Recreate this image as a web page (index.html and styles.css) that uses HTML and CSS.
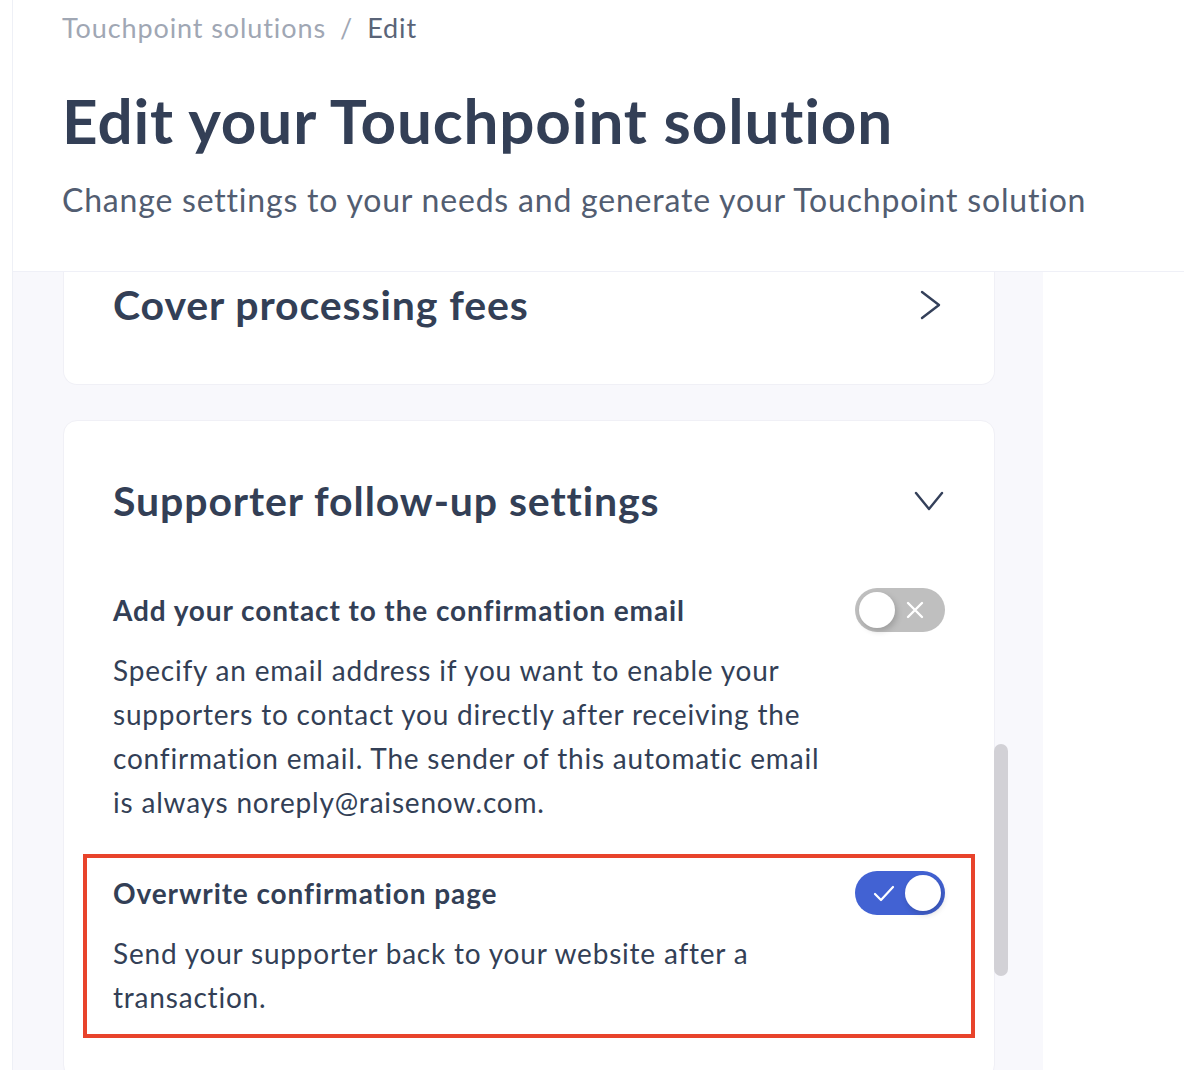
FILE: index.html
```html
<!DOCTYPE html>
<html lang="en">
<head>
<meta charset="utf-8">
<title>Edit your Touchpoint solution</title>
<link rel="stylesheet" href="styles.css">
</head>
<body>
<div class="app">
  <header class="page-header">
    <nav class="breadcrumb">
      <span class="crumb-link">Touchpoint solutions</span>
      <span class="crumb-sep">/</span>
      <span class="crumb-current">Edit</span>
    </nav>
    <h1 class="page-title">Edit your Touchpoint solution</h1>
    <p class="page-subtitle">Change settings to your needs and generate your Touchpoint solution</p>
  </header>
  <div class="content">
    <main class="panel">
      <section class="card card-clipped">
        <div class="card-head">
          <h2 class="card-title">Cover processing fees</h2>
          <svg class="chevron" width="28" height="30" viewBox="0 0 28 30"><polyline points="9,2 26,15 9,28" fill="none" stroke="#34405a" stroke-width="2.4" stroke-linecap="round" stroke-linejoin="round"/></svg>
        </div>
      </section>
      <section class="card card-open">
        <div class="card-head">
          <h2 class="card-title">Supporter follow-up settings</h2>
          <svg class="chevron" width="30" height="24" viewBox="0 0 30 24"><polyline points="2,4 15,20 28,4" fill="none" stroke="#34405a" stroke-width="2.4" stroke-linecap="round" stroke-linejoin="round"/></svg>
        </div>
        <div class="setting">
          <div class="setting-head">
            <h3 class="setting-title">Add your contact to the confirmation email</h3>
            <span class="toggle toggle-off">
              <svg class="toggle-icon icon-x" width="18" height="18" viewBox="0 0 18 18"><path d="M2 2 L16 16 M16 2 L2 16" stroke="#fff" stroke-width="2.4" stroke-linecap="round"/></svg>
              <span class="knob"></span>
            </span>
          </div>
          <p class="setting-desc">Specify an email address if you want to enable your<br>supporters to contact you directly after receiving the<br>confirmation email. The sender of this automatic email<br>is always noreply@raisenow.com.</p>
        </div>
        <div class="setting setting-highlight">
          <div class="setting-head">
            <h3 class="setting-title">Overwrite confirmation page</h3>
            <span class="toggle toggle-on">
              <svg class="toggle-icon icon-check" width="22" height="18" viewBox="0 0 22 18"><path d="M2 9 L8 15 L20 2" fill="none" stroke="#fff" stroke-width="2.2" stroke-linecap="round" stroke-linejoin="round"/></svg>
              <span class="knob"></span>
            </span>
          </div>
          <p class="setting-desc">Send your supporter back to your website after a<br>transaction.</p>
        </div>
      </section>
      <div class="scroll-thumb"></div>
    </main>
    <aside class="side"></aside>
  </div>
</div>
</body>
</html>
```
FILE: styles.css
```css
html, body {
  margin: 0;
  padding: 0;
  background: #ffffff;
  height: 100%;
}
body {
  font-family: "Lato", "Open Sans", sans-serif;
  color: #333f56;
  overflow: hidden;
}
.app {
  margin-left: 12px;
  border-left: 1px solid #eef0f6;
  height: 1070px;
  display: flex;
  flex-direction: column;
}
.page-header {
  padding: 0 0 0 49px;
  height: 272px;
  border-bottom: 1px solid #eff0f7;
  box-sizing: border-box;
}
.breadcrumb {
  padding-top: 10px;
  font-size: 27px;
  line-height: 36px;
  letter-spacing: 0.9px;
  display: flex;
  gap: 14px;
}
.crumb-link { color: #a0a7b4; }
.crumb-sep { color: #a0a7b4; }
.crumb-current { color: #5a6478; }
.page-title {
  margin: 38px 0 0;
  font-size: 62px;
  line-height: 72px;
  font-weight: 700;
  color: #333f56;
  letter-spacing: 0.85px;
}
.page-subtitle {
  margin: 24px 0 0;
  font-size: 32px;
  line-height: 40px;
  color: #525d71;
  letter-spacing: 0.8px;
}
.content {
  flex: 1;
  display: flex;
  overflow: hidden;
}
.panel {
  position: relative;
  width: 1030px;
  background: #f8f8fc;
  padding: 0 48px 0 50px;
  box-sizing: border-box;
  display: flex;
  flex-direction: column;
  gap: 35px;
  overflow: hidden;
}
.side { flex: 1; background: #fff; }
.card {
  background: #fff;
  border: 1px solid #f0f0f6;
  border-radius: 14px;
  padding: 0 49px;
  flex-shrink: 0;
}
.card-clipped {
  border-top: none;
  border-top-left-radius: 0;
  border-top-right-radius: 0;
  padding-top: 9px;
  padding-bottom: 55px;
}
.card-open {
  padding-top: 56px;
  padding-bottom: 40px;
}
.card-head {
  display: flex;
  align-items: center;
  justify-content: space-between;
  height: 48px;
}
.card-title {
  margin: 0;
  font-size: 41px;
  font-weight: 700;
  line-height: 48px;
  letter-spacing: 0.9px;
  color: #333f56;
}
.card-clipped .chevron { margin-right: 4px; }
.card-open .chevron { margin-right: 1px; }
.setting {
  border: 4px solid transparent;
  margin: 0 -30px;
  padding: 13px 26px;
}
.card-open .card-head + .setting { margin-top: 46px; }
.setting + .setting { margin-top: 13px; }
.setting-highlight {
  border-color: #e8432b;
  padding-bottom: 15px;
}
.setting-head {
  display: flex;
  align-items: center;
  justify-content: space-between;
  height: 44px;
}
.setting-title {
  margin: 0;
  font-size: 28px;
  font-weight: 700;
  line-height: 36px;
  letter-spacing: 0.9px;
  color: #333f56;
}
.setting-desc {
  margin: 16px 0 0;
  font-size: 28px;
  line-height: 44px;
  letter-spacing: 0.8px;
  color: #333f56;
}
.toggle {
  position: relative;
  width: 90px;
  height: 44px;
  border-radius: 22px;
  flex-shrink: 0;
  display: block;
}
.toggle-off { background: #bfbfbf; }
.toggle-on { background: #4262d3; }
.knob {
  position: absolute;
  top: 4px;
  width: 36px;
  height: 36px;
  border-radius: 50%;
  background: #fff;
  box-shadow: 2px 3px 6px rgba(0, 0, 0, 0.18);
}
.toggle-off .knob { left: 4px; }
.toggle-on .knob { right: 4px; }
.toggle-icon { position: absolute; }
.icon-x { left: 51px; top: 13px; }
.icon-check { left: 18px; top: 14px; }
.scroll-thumb {
  position: absolute;
  left: 981px;
  top: 472px;
  width: 14px;
  height: 232px;
  border-radius: 7px;
  background: #d2d1d6;
}
```
